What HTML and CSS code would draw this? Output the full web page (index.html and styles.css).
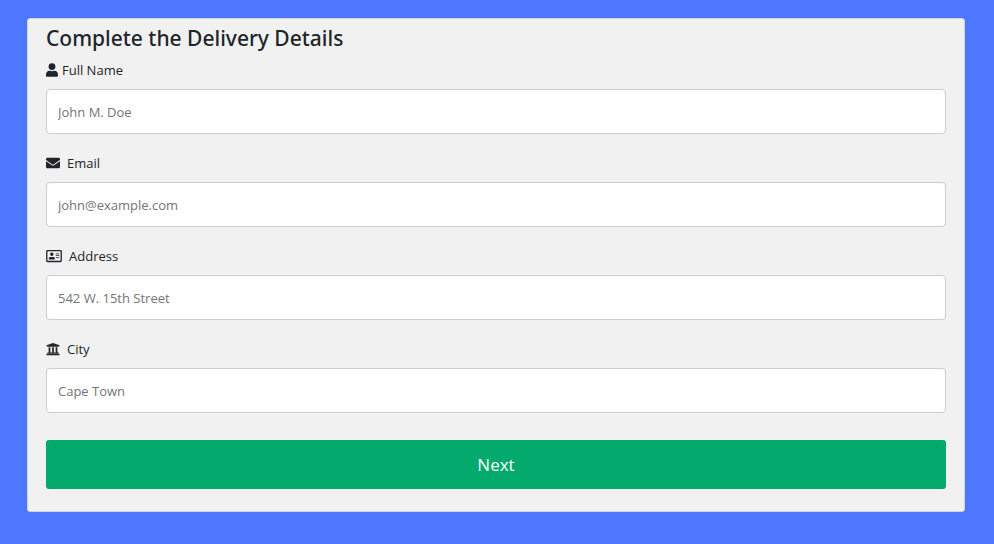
FILE: index.html
```html
<!DOCTYPE html>
<html lang="en">
<head>
<meta charset="utf-8">
<meta name="viewport" content="width=device-width, initial-scale=1">
<title>Delivery Details</title>
<link rel="stylesheet" href="styles.css">
</head>
<body>
<main class="card">
  <h1 class="title">Complete the Delivery Details</h1>
  <form>
    <div class="field">
      <label class="label label-tight" for="name">
        <svg class="icon" width="12" height="14" viewBox="0 0 448 512" aria-hidden="true"><path d="M224 256a128 128 0 1 0 0-256 128 128 0 1 0 0 256zm90 32h-17a174 174 0 0 1-146 0h-17C60 288 0 348 0 422v42c0 27 21 48 48 48h352c27 0 48-21 48-48v-42c0-74-60-134-134-134z"/></svg>
        Full Name
      </label>
      <input class="input" type="text" id="name" placeholder="John M. Doe">
    </div>
    <div class="field">
      <label class="label" for="email">
        <svg class="icon" width="14" height="14" viewBox="0 0 512 512" aria-hidden="true"><path d="M502 191c4-3 10 0 10 5v204c0 27-21 48-48 48H48c-27 0-48-21-48-48V196c0-5 6-8 10-5 22 17 52 40 155 114 21 15 57 48 91 48 34 0 71-33 91-48 103-74 133-97 155-114zM256 320c23 0 57-29 74-42 133-96 143-105 173-128 6-5 9-12 9-19v-19c0-27-21-48-48-48H48c-27 0-48 21-48 48v19c0 7 3 14 9 19 30 23 40 32 173 128 17 13 51 42 74 42z"/></svg>
        Email
      </label>
      <input class="input" type="email" id="email" placeholder="john@example.com">
    </div>
    <div class="field">
      <label class="label" for="address">
        <svg class="icon" width="16" height="14" viewBox="0 0 576 512" aria-hidden="true"><path d="M528 32H48C21 32 0 53 0 80v352c0 27 21 48 48 48h480c27 0 48-21 48-48V80c0-27-21-48-48-48zm0 400H48V80h480v352zM208 256a64 64 0 1 0 0-128 64 64 0 1 0 0 128zm-90 128h180c12 0 22-9 22-19v-19c0-32-30-58-67-58-11 0-19 8-45 8-27 0-33-8-45-8-37 0-67 26-67 58v19c0 10 10 19 22 19zm242-64h112c4 0 8-4 8-8v-16c0-4-4-8-8-8H360c-4 0-8 4-8 8v16c0 4 4 8 8 8zm0-64h112c4 0 8-4 8-8v-16c0-4-4-8-8-8H360c-4 0-8 4-8 8v16c0 4 4 8 8 8zm0-64h112c4 0 8-4 8-8v-16c0-4-4-8-8-8H360c-4 0-8 4-8 8v16c0 4 4 8 8 8z"/></svg>
        Address
      </label>
      <input class="input" type="text" id="address" placeholder="542 W. 15th Street">
    </div>
    <div class="field">
      <label class="label" for="city">
        <svg class="icon" width="14" height="14" viewBox="0 0 512 512" aria-hidden="true"><path d="M496 128v16a8 8 0 0 1-8 8h-24v12c0 7-5 12-12 12H60c-7 0-12-5-12-12v-12H24a8 8 0 0 1-8-8v-16a8 8 0 0 1 5-7l232-88a8 8 0 0 1 6 0l232 88a8 8 0 0 1 5 7zm-24 304H40c-13 0-24 11-24 24v16a8 8 0 0 0 8 8h464a8 8 0 0 0 8-8v-16c0-13-11-24-24-24zM96 192v192H60c-7 0-12 5-12 12v20h416v-20c0-7-5-12-12-12h-36V192h-64v192h-64V192h-64v192h-64V192H96z"/></svg>
        City
      </label>
      <input class="input" type="text" id="city" placeholder="Cape Town">
    </div>
    <button class="next" type="submit">Next</button>
  </form>
</main>
</body>
</html>
```
FILE: styles.css
```css
* {
  box-sizing: border-box;
}

body {
  margin: 0;
  padding: 18px 29px 32px 27px;
  background: #4e77ff;
  color: #212529;
  font-family: "Segoe UI", "Open Sans", "Noto Sans", sans-serif;
  font-size: 13px;
}

.card {
  padding: 5px 18px 22px;
  background: #f1f1f1;
  border: 1px solid #d3d3d3;
  border-radius: 3px;
}

.title {
  margin: 0 0 7px;
  font-family: "Segoe UI", "Noto Sans", "Open Sans", sans-serif;
  font-size: 21px;
  line-height: 28px;
  font-weight: 500;
}

.field {
  margin-bottom: 18px;
}

.label {
  display: flex;
  align-items: center;
  gap: 7px;
  height: 22px;
  margin-bottom: 8px;
}

.label-tight {
  gap: 4px;
}

.icon {
  flex: none;
  fill: currentColor;
}

.input {
  display: block;
  width: 100%;
  height: 45px;
  padding: 0 11px;
  border: 1px solid #ccc;
  border-radius: 4px;
  background: #fff;
  color: #212529;
  font: inherit;
}

.input::placeholder {
  color: #757575;
  opacity: 1;
}

.next {
  display: block;
  width: 100%;
  height: 49px;
  margin-top: 27px;
  border: 0;
  border-radius: 3px;
  background: #04aa6d;
  color: #fff;
  font: inherit;
  font-size: 17px;
  cursor: pointer;
}
```
